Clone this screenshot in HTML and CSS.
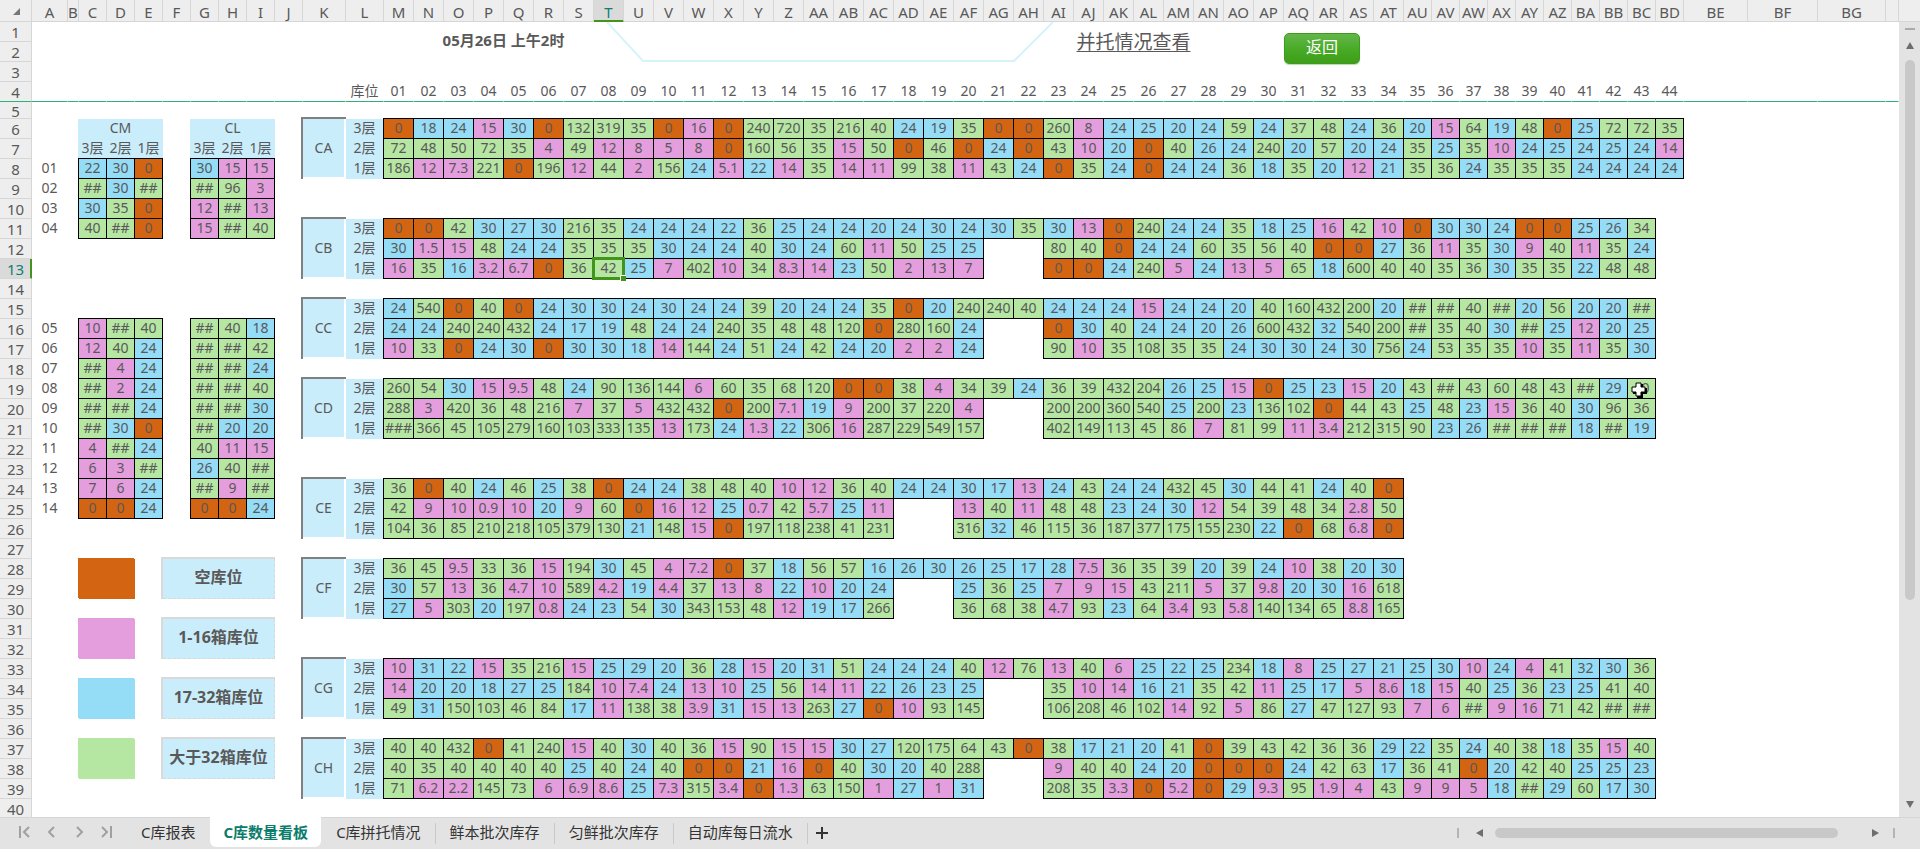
FILE: index.html
```html
<!DOCTYPE html>
<html lang="zh-CN">
<head>
<meta charset="utf-8">
<title>C库数量看板</title>
<link rel="stylesheet" href="styles.css">
</head>
<body>
<main class="workspace">
  <div class="viewport">
    <table class="grid" id="grid"></table>
    <svg class="banner" viewBox="0 0 450 43" width="450" height="43" aria-hidden="true">
      <polyline points="2,0 38,39 409,39 448,0" fill="none" stroke="#d6f3fd" stroke-width="2"/>
    </svg>
  </div>
  <div class="vscroll">
    <span class="vscroll-head"></span>
    <span class="vscroll-dash"></span>
    <button class="arrow" aria-label="向上滚动"><svg width="8" height="7"><path d="M4 0 L8 7 H0 Z"/></svg></button>
    <span class="vscroll-track"><span class="vscroll-thumb"></span></span>
    <button class="arrow" aria-label="向下滚动"><svg width="8" height="7"><path d="M0 0 H8 L4 7 Z"/></svg></button>
  </div>
</main>
<footer class="tabbar">
  <div class="navs">
    <button class="nav" aria-label="第一个工作表"><svg width="14" height="14"><path d="M2 1V13M11 2L6 7L11 12"/></svg></button>
    <button class="nav" aria-label="上一个工作表"><svg width="14" height="14"><path d="M9 2L4 7L9 12"/></svg></button>
    <button class="nav" aria-label="下一个工作表"><svg width="14" height="14"><path d="M5 2L10 7L5 12"/></svg></button>
    <button class="nav" aria-label="最后一个工作表"><svg width="14" height="14"><path d="M12 1V13M3 2L8 7L3 12"/></svg></button>
  </div>
  <div class="tabs">
    <button class="tab plain">C库报表</button>
    <button class="tab active">C库数量看板</button>
    <button class="tab">C库拼托情况</button>
    <button class="tab">鲜本批次库存</button>
    <button class="tab">匀鲜批次库存</button>
    <button class="tab">自动库每日流水</button>
    <button class="add" aria-label="新建工作表"><svg width="12" height="12"><path d="M6 0V12M0 6H12"/></svg></button>
  </div>
  <div class="hscroll">
    <span class="hscroll-split"></span>
    <button class="arrow" aria-label="向左滚动"><svg width="7" height="8"><path d="M7 0V8L0 4Z"/></svg></button>
    <span class="hscroll-track"><span class="hscroll-thumb"></span></span>
    <button class="arrow" aria-label="向右滚动"><svg width="7" height="8"><path d="M0 0V8L7 4Z"/></svg></button>
    <span class="hscroll-split"></span>
  </div>
</footer>
<script src="grid.js"></script>
</body>
</html>
```
FILE: grid.js
```js
const LAST_ROW = 40;
const LAST_COL = 60;
const FIRST_SLOT = 13;

const aisles = [
  ["CA", 6, [
    "0 18 24 15 30 0 132 319 35 0 16 0 240 720 35 216 40 24 19 35 0 0 260 8 24 25 20 24 59 24 37 48 24 36 20 15 64 19 48 0 25 72 72 35",
    "72 48 50 72 35 4 49 12 8 5 8 0 160 56 35 15 50 0 46 0 24 0 43 10 20 0 40 26 24 240 20 57 20 24 35 25 35 10 24 25 24 25 24 14",
    "186 12 7.3 221 0 196 12 44 2 156 24 5.1 22 14 35 14 11 99 38 11 43 24 0 35 24 0 24 24 36 18 35 20 12 21 35 36 24 35 35 35 24 24 24 24"]],
  ["CB", 11, [
    "0 0 42 30 27 30 216 35 24 24 24 22 36 25 24 24 20 24 30 24 30 35 30 13 0 240 24 24 35 18 25 16 42 10 0 30 30 24 0 0 25 26 34",
    "30 1.5 15 48 24 24 35 35 35 30 24 24 40 30 24 60 11 50 25 25 - - 80 40 0 24 24 60 35 56 40 0 0 27 36 11 35 30 9 40 11 35 24",
    "16 35 16b 3.2 6.7 0 36 42 25 7 402 10 34 8.3 14 23 50 2 13 7 - - 0 0 24 240 5 24 13 5 65 18 600 40 40 35 36 30 35 35 22 48 48"]],
  ["CC", 15, [
    "24 540 0 40 0 24 30 30 24 30 24 24 39 20 24 24 35 0 20 240 240 40 24 24 24 15 24 24 20 40 160 432 200 20 ## ## 40 ## 20 56 20 20 ##",
    "24 24 240 240 432 24 17 19 48 24 24 240 35 48 48 120 0 280 160 24 - - 0 30 40 24 24 20 26 600 432 32 540 200 ## 35 40 30 ## 25 12 20 25",
    "10 33 0 24 30 0 30 30 18 14 144 24 51 24 42 24 20 2 2 24 - - 90 10 35 108 35 35 24 30 30 24 30 756 24 53 35 35 10 35 11 35 30"]],
  ["CD", 19, [
    "260 54 30 15 9.5 48 24 90 136 144 6 60 35 68 120 0 0 38 4 34 39 24 36 39 432 204 26 25 15 0 25 23 15 20 43 ## 43 60 48 43 ## 29 40",
    "288 3 420 36 48 216 7 37 5 432 432 0 200 7.1 19 9 200 37 220 4 - - 200 200 360 540 25 200 23 136 102 0 44 43 25 48 23 15 36 40 30 96 36",
    "### 366 45 105 279 160 103 333 135 13 173 24 1.3 22 306 16 287 229 549 157 - - 402 149 113 45 86 7 81 99 11 3.4 212 315 90 23 26 ## ## ## 18 ## 19"]],
  ["CE", 24, [
    "36 0 40 24 46 25 38 0 24 24 38 48 40 10 12 36 40 24 24 30 17 13 24 43 24 24 432 45 30 44 41 24 40 0",
    "42 9 10 0.9 10 20 9 60 0 16 12 25 0.7 42 5.7 25 11 - - 13 40 11 48 48 23 24 30 12 54 39 48 34 2.8 50",
    "104 36 85 210 218 105 379 130 21 148 15 0 197 118 238 41 231 - - 316 32 46 115 36 187 377 175 155 230 22 0 68 6.8 0"]],
  ["CF", 28, [
    "36 45 9.5 33 36 15 194 30 45 4 7.2 0 37 18 56 57 16b 26 30 26 25 17 28 7.5 36 35 39 20 39 24 10 38 20 30",
    "30 57 13 36 4.7 10 589 4.2 19 4.4 37 13 8 22 10 20 24 - - 25 36 25 7 9 15 43 211 5 37 9.8 20 30 16 618",
    "27 5 303 20 197 0.8 24 23 54 30 343 153 48 12 19 17 266 - - 36 68 38 4.7 93 23 64 3.4 93 5.8 140 134 65 8.8 165"]],
  ["CG", 33, [
    "10 31 22 15 35 216 15 25 29 20 36 28 15 20 31 51 24 24 24 40 12 76 13 40 6 25 22 25 234 18 8 25 27 21 25 30 10 24 4 41 32 30 36",
    "14 20 20 18 27 25 184 10 7.4 24 13 10 25 56 14 11 22 26 23 25 - - 35 10 14 16b 21 35 42 11 25 17 5 8.6 18 15 40 25 36 23 25 41 40",
    "49 31 150 103 46 84 17 11 138 38 3.9 31 15 13 263 27 0 10 93 145 - - 106 208 46 102 14 92 5 86 27 47 127 93 7 6 ## 9 16 71 42 ## ##"]],
  ["CH", 37, [
    "40 40 432 0 41 240 15 40 30 40 36 15 90 15 15 30 27 120 175 64 43 0 38 17 21 20 41 0 39 43 42 36 36 29 22 35 24 40 38 18 35 15 40",
    "40 35 40 40 40 40 25 40 24 40 0 0 21 16 0 40 30 20 40 288 - - 9 40 40 24 20 0 0 0 24 42 63 17 36 41 0 20 42 40 25 25 23",
    "71 6.2 2.2 145 73 6 6.9 8.6 25 7.3 315 3.4 0 1.3 63 150 1 27 1 31 - - 208 35 3.3 0 5.2 0 29 9.3 95 1.9 4 43 9 9 5 18 ## 29 60 17 30"]]
];

/* Side aisles: name, first column, slots 01-04 and slots 05-14 */
const sideAisles = [
  ["CM", 3,
    ["22 30 0", "## 30 ##", "30 35 0", "40 ## 0"],
    ["10 ## 40", "12 40 24", "## 4 24", "## 2 24", "## ## 24", "## 30 0", "4 ## 24", "6 3 ##", "7 6 24", "0 0 24"]],
  ["CL", 7,
    ["30 15 15", "## 96 3", "12 ## 13", "15 ## 40"],
    ["## 40 18", "## ## 42", "## ## 24", "## ## 40", "## ## 30", "## 20 20", "40 11 15", "26 40 ##", "## 9 ##", "0 0 24"]]
];

const legend = [
  [28, "空库位", "empty"],
  [31, "1-16箱库位", "low"],
  [34, "17-32箱库位", "mid"],
  [37, "大于32箱库位", "high"]
];

const levels = ["3层", "2层", "1层"];
const cells = new Map();
const covered = new Set();

function put(row, col, html, cls, rows = 1, cols = 1) {
  for (let r = row; r < row + rows; r++)
    for (let c = col; c < col + cols; c++)
      covered.add(r + ":" + c);
  covered.delete(row + ":" + col);
  cells.set(row + ":" + col, { html, cls, rows, cols });
}

function tone(value) {
  if (value.startsWith("#")) return "high";
  if (value.endsWith("b")) return "mid";
  const n = Number(value);
  return n === 0 ? "empty" : n <= 16 ? "low" : n <= 32 ? "mid" : "high";
}

function putValues(row, col, line) {
  line.split(" ").forEach((value, i) => {
    if (value !== "-") put(row, col + i, value.replace("b", ""), "box " + tone(value));
  });
}

const pad = n => String(n).padStart(2, "0");

function colName(n) {
  return n > 26 ? String.fromCharCode(64 + Math.floor((n - 1) / 26)) + colName((n - 1) % 26 + 1)
                : String.fromCharCode(64 + n);
}

function colClass(n) {
  if (n === 1) return "w-a";
  if (n === 2) return "w-b";
  if (n <= 10) return "w-side";
  if (n === 11) return "w-k";
  if (n === 12) return "w-l";
  if (n <= 46) return "w-slot";
  if (n <= 56) return "w-side";
  return { 57: "w-be", 58: "w-bf", 59: "w-bg" }[n] || "";
}

put(1, 13, "05月26日 上午2时", "title", 2, 8);
put(1, 36, '<a class="merge-link" href="#">并托情况查看</a>', "link-cell", 2, 4);
put(1, 43, '<button class="back">返回</button>', "back-cell", 3, 3);
put(4, 12, "库位", "");
for (let i = 0; i < 44; i++) put(4, FIRST_SLOT + i, pad(i + 1), "");

for (const [name, row, lines] of aisles) {
  put(row, 11, name, "aisle", 3, 1);
  lines.forEach((line, i) => {
    put(row + i, 12, levels[i], "label");
    putValues(row + i, FIRST_SLOT, line);
  });
}

for (const [name, col, top, bottom] of sideAisles) {
  put(6, col, name, "label side", 1, 3);
  levels.forEach((level, i) => put(7, col + i, level, "label side"));
  top.forEach((line, i) => putValues(8 + i, col, line));
  bottom.forEach((line, i) => putValues(16 + i, col, line));
}
for (let i = 0; i < 14; i++) put(i < 4 ? 8 + i : 12 + i, 1, pad(i + 1), "");

for (const [row, text, cls] of legend) {
  put(row, 3, "", "swatch " + cls, 2, 2);
  put(row, 6, text, "legend", 2, 4);
}

cells.get("13:20").html += '<span class="selection"><span class="handle"></span></span>';
cells.get("13:20").cls += " anchor";
cells.get("19:55").html += '<svg class="cursor" width="16" height="16" viewBox="0 0 16 16"><path d="M6 2h6v4h4v6h-4v4H6v-4H2V6h4z" fill="#000"/><path d="M5 1h5v4h4v5h-4v4H5v-4H1V5h4z" fill="#fff" stroke="#000"/></svg>';
cells.get("19:55").cls += " anchor";

let html = '<colgroup><col class="w-head">';
for (let c = 1; c <= LAST_COL; c++) html += `<col class="${colClass(c)}">`;
html += '</colgroup><thead><tr><th class="corner"><svg width="7" height="7"><path d="M7 0V7H0Z"/></svg></th>';
for (let c = 1; c <= LAST_COL; c++)
  html += `<th scope="col"${c === 20 ? ' class="current"' : ""}>${c < LAST_COL ? colName(c) : ""}</th>`;
html += "</tr></thead><tbody>";
for (let r = 1; r <= LAST_ROW; r++) {
  html += `<tr${r === 4 ? ' class="frozen"' : r === 5 ? ' class="short"' : ""}><th scope="row"${r === 13 ? ' class="current"' : ""}>${r}</th>`;
  for (let c = 1; c <= LAST_COL; c++) {
    const key = r + ":" + c;
    if (covered.has(key)) continue;
    const cell = cells.get(key);
    html += cell
      ? `<td class="${cell.cls}" rowspan="${cell.rows}" colspan="${cell.cols}">${cell.html}</td>`
      : "<td></td>";
  }
  html += "</tr>";
}
document.getElementById("grid").innerHTML = html + "</tbody>";
```
FILE: styles.css
```css
* { box-sizing: border-box; }

body {
  margin: 0;
  height: 100vh;
  display: flex;
  flex-direction: column;
  overflow: hidden;
  background: #fff;
  color: #595959;
  font-family: "Noto Sans", "Noto Sans CJK SC", sans-serif;
  font-size: 14px;
}

button {
  margin: 0;
  padding: 0;
  border: 0;
  background: none;
  font: inherit;
  color: inherit;
}

.workspace {
  flex: 1;
  min-height: 0;
  display: flex;
}

.viewport {
  flex: 1;
  min-width: 0;
  position: relative;
  overflow: hidden;
}

/* Sheet */
.grid {
  width: 100%;
  table-layout: fixed;
  border-collapse: separate;
  border-spacing: 0;
}

.w-head { width: 32px; }
.w-a { width: 36px; }
.w-b { width: 11px; }
.w-side { width: 28px; }
.w-k { width: 43px; }
.w-l { width: 38px; }
.w-slot { width: 30px; }
.w-be { width: 64px; }
.w-bf { width: 70px; }
.w-bg { width: 68px; }

.grid tr { height: 20px; }
.grid thead tr { height: 22px; }
.grid .short { height: 17px; }

.grid td {
  padding: 0 0 2px;
  border: 0 solid transparent;
  border-width: 0 1px 1px 0;
  line-height: 17px;
  text-align: center;
  white-space: nowrap;
}

.grid th {
  padding: 1px 0 0;
  border: 0 solid #d6d6d6;
  border-width: 0 1px 1px 0;
  background: #eee;
  font-size: 15px;
  font-weight: 400;
  line-height: 18px;
  text-align: center;
  white-space: nowrap;
}

.grid thead th { padding-top: 2px; }
.grid .short td, .grid .short th { line-height: 14px; }

.corner svg { display: block; margin: 0 0 0 13px; fill: #777; }

.grid th.current { background: #dadada; color: #0b8173; }
.grid thead th.current { box-shadow: inset 0 -1px #42941c; border-bottom-color: #42941c; }
.grid tbody th.current { box-shadow: inset -1px 0 #42941c; border-right-color: #42941c; }

.grid .frozen td, .grid .frozen th { border-bottom-color: #2bb07f; }

.grid .box {
  border-color: #000;
  box-shadow: 0 -1px #000, -1px 0 #000, -1px -1px #000;
}

.empty { background: #d26412; }
.low { background: #e49edd; }
.mid { background: #95dcf7; }
.high { background: #b5e6a2; }

.label { background: #caedfb; }
.side { box-shadow: -1px 0 #caedfb; }

.swatch.empty { box-shadow: -1px -1px #d26412; }
.swatch.low { box-shadow: -1px -1px #e49edd; }
.swatch.mid { box-shadow: -1px -1px #95dcf7; }
.swatch.high { box-shadow: -1px -1px #b5e6a2; }

.grid .aisle {
  background: #caedfb;
  border-color: #fff;
  border-width: 0 2px 2px 0;
  box-shadow: 0 -2px #808080, -2px 0 #808080, -2px -2px #808080;
}

.grid .legend {
  background: #caedfb;
  border: 0 dashed #d9d9d9;
  border-width: 0 1px 1px 0;
  box-shadow: 0 -2px #d9d9d9, -2px 0 #d9d9d9, -2px -2px #d9d9d9;
  font-size: 16px;
  font-weight: 700;
}

.grid .title { font-size: 15px; font-weight: 700; }

.grid .link-cell { padding: 2px 0 0; }

.merge-link {
  color: inherit;
  font-size: 19px;
  text-decoration: underline;
  text-underline-offset: 2px;
}

.grid .back-cell {
  padding-top: 11px;
  vertical-align: top;
  text-align: left;
}

.back {
  display: block;
  width: 76px;
  height: 31px;
  padding-bottom: 3px;
  border: 1px solid #3f9b1c;
  border-radius: 5px;
  background: linear-gradient(#63b64a, #45a922 60%, #3f9d1b);
  box-shadow: 0 1px 1px #b9d8ae;
  color: #fff;
  font-size: 16px;
  line-height: 24px;
}

.anchor { position: relative; }

.selection {
  position: absolute;
  inset: -2px;
  border: 3px solid #42941c;
}

.handle {
  position: absolute;
  right: -4px;
  bottom: -4px;
  width: 6px;
  height: 6px;
  border: 1px solid #fff;
  border-width: 1px 0 0 1px;
  background: #42941c;
}

.cursor { position: absolute; left: 3px; top: 3px; }

.banner { position: absolute; left: 605px; top: 22px; }

/* Scroll bars */
.vscroll {
  width: 21px;
  display: flex;
  flex-direction: column;
  align-items: center;
  background: #e3e3e3;
}

.vscroll-head {
  align-self: stretch;
  height: 22px;
  border-bottom: 1px solid #d6d6d6;
  background: #eee;
}

.vscroll-dash {
  width: 10px;
  height: 2px;
  margin: 6px 0 12px;
  background: #aaa;
}

.arrow { display: block; }
.arrow svg { display: block; fill: #6e6e6e; }

.vscroll-track {
  flex: 1;
  padding: 11px 0;
}

.vscroll-thumb {
  display: block;
  width: 10px;
  height: 74%;
  border-radius: 5px;
  background: #c8c8c8;
}

.vscroll > .arrow:last-child { margin-bottom: 9px; }

.tabbar {
  height: 32px;
  display: flex;
  align-items: stretch;
  border-top: 1px solid #d6d6d6;
  background: #e3e3e3;
}

.navs {
  width: 127px;
  display: flex;
  align-items: center;
  gap: 13px;
  padding: 0 0 3px 18px;
}

.nav svg {
  display: block;
  fill: none;
  stroke: #a0a0a0;
  stroke-width: 2;
}

.tabs { display: flex; align-items: stretch; }

.tab {
  position: relative;
  padding: 0 15px 4px 14px;
  color: #333;
  font-size: 15px;
}

.tab:not(.plain):not(.active)::after {
  content: "";
  position: absolute;
  right: 0;
  top: 5px;
  bottom: 5px;
  width: 1px;
  background: #c9c9c9;
}

.tab.active {
  margin: -1px 1px 2px 0;
  padding: 0 13px 2px;
  border-radius: 0 0 6px 6px;
  background: #fff;
  color: #0b7d6c;
  font-weight: 700;
}

.add { padding: 0 8px 1px; }
.add svg { display: block; stroke: #333; stroke-width: 2; }

.hscroll {
  width: 438px;
  display: flex;
  align-items: center;
  margin-left: auto;
  margin-right: 25px;
  padding-bottom: 1px;
}

.hscroll-split {
  width: 2px;
  height: 10px;
  background: #b4b4b4;
}

.hscroll > .arrow:nth-child(2) { margin: 0 12px 0 17px; }
.hscroll > .arrow:nth-child(4) { margin-right: 14px; }
.hscroll-track { flex: 1; }

.hscroll-thumb {
  display: block;
  width: 91%;
  height: 10px;
  border-radius: 5px;
  background: #c8c8c8;
}
```
